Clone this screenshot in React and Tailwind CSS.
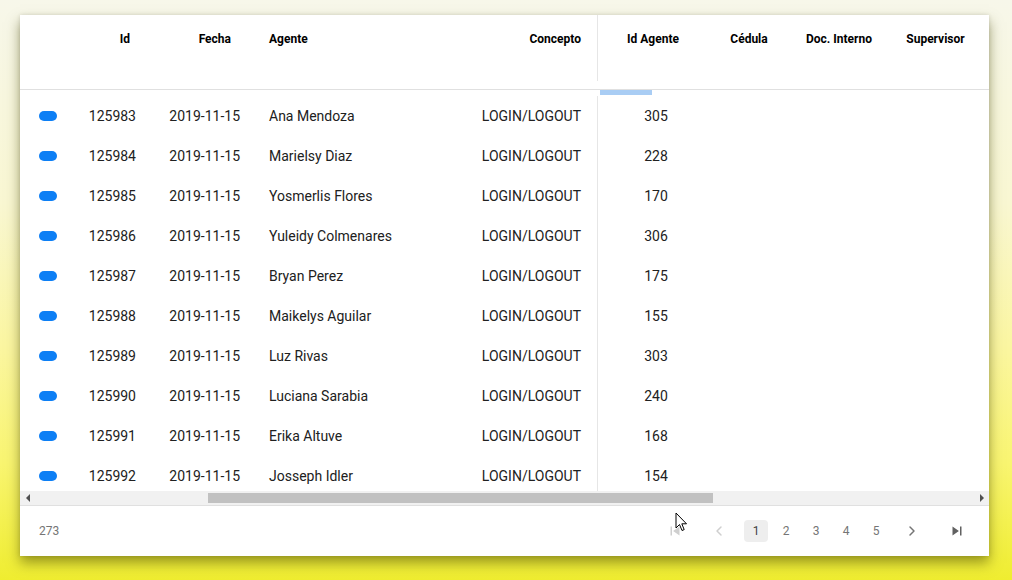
import { ChevronLeft, ChevronRight } from "lucide-react";

const rows = [
  ["125983", "Ana Mendoza", "305"],
  ["125984", "Marielsy Diaz", "228"],
  ["125985", "Yosmerlis Flores", "170"],
  ["125986", "Yuleidy Colmenares", "306"],
  ["125987", "Bryan Perez", "175"],
  ["125988", "Maikelys Aguilar", "155"],
  ["125989", "Luz Rivas", "303"],
  ["125990", "Luciana Sarabia", "240"],
  ["125991", "Erika Altuve", "168"],
  ["125992", "Josseph Idler", "154"],
];

const FirstPageIcon = ({ className }) => (
  <svg viewBox="0 0 24 24" className={className} fill="currentColor">
    <path d="M6 6h2v12H6zm3.5 6l8.5 6V6z" />
  </svg>
);

const LastPageIcon = ({ className }) => (
  <svg viewBox="0 0 24 24" className={className} fill="currentColor">
    <path d="M6 18l8.5-6L6 6v12zM16 6v12h2V6h-2z" />
  </svg>
);

export default function App() {
  return (
    <div
      className="relative w-[1012px] h-[580px] overflow-hidden pt-[15px] pl-[20px] bg-[linear-gradient(180deg,#f7f7ea_0%,#f9f7d2_35%,#fbf6a0_60%,#f9f570_80%,#efed30_100%)]"
      style={{ fontFamily: "Roboto, 'Liberation Sans', sans-serif" }}
    >
      <div className="w-[969px] bg-white shadow-[0_7px_12px_rgba(70,70,0,0.5),0_0_4px_rgba(0,0,0,0.12)]">
        {/* header */}
        <div className="flex h-[75px] border-b border-[#e0e0e0] text-[12px] font-bold text-black">
          <div className="w-[60px]" />
          <div className="w-[72px] pt-[15px] pr-[22px] text-right">Id</div>
          <div className="w-[104px] pt-[15px] pr-[25px] text-right">Fecha</div>
          <div className="w-[164px] pt-[15px] pl-[13px]">Agente</div>
          <div className="w-[178px] h-[66px] pt-[15px] pr-[16px] text-right border-r border-[#e6e6e6]">Concepto</div>
          <div className="w-[110px] pt-[15px] text-center">Id Agente</div>
          <div className="w-[82px] pt-[15px] text-center">Cédula</div>
          <div className="w-[98px] pt-[15px] text-center">Doc. Interno</div>
          <div className="w-[95px] pt-[15px] text-center">Supervisor</div>
        </div>

        {/* body */}
        <div className="h-[401px] overflow-hidden">
          <div className="h-[6px] pl-[580px]">
            <div className="w-[52px] h-[5px] bg-[#a9cdf4]" />
          </div>
          {rows.map(([id, name, agent]) => (
            <div key={id} className="flex h-[40px] items-center text-[14px] text-[#212121]">
              <div className="w-[60px] pl-[19px]">
                <div className="w-[18px] h-[10px] rounded-full bg-[#0d7ff5]" />
              </div>
              <div className="w-[72px] pr-[16px] text-right">{id}</div>
              <div className="w-[104px] pr-[16px] text-right">2019-11-15</div>
              <div className="w-[164px] pl-[13px] whitespace-nowrap">{name}</div>
              <div className="w-[178px] h-full flex items-center justify-end pr-[16px] border-r border-[#e6e6e6]">
                LOGIN/LOGOUT
              </div>
              <div className="w-[112px] text-center pl-[4px]">{agent}</div>
              <div className="w-[80px]" />
              <div className="w-[98px]" />
              <div className="w-[95px]" />
            </div>
          ))}
        </div>

        {/* horizontal scrollbar */}
        <div className="flex h-[15px] items-center bg-[#f1f1f1] border-b border-[#e0e0e0]">
          <div className="w-[15px] flex justify-center">
            <div className="w-0 h-0 border-y-[4px] border-y-transparent border-r-[4px] border-r-[#505050]" />
          </div>
          <div className="flex-1 flex items-center pl-[173px]">
            <div className="w-[505px] h-[10px] bg-[#c1c1c1]" />
          </div>
          <div className="w-[15px] flex justify-center">
            <div className="w-0 h-0 border-y-[4px] border-y-transparent border-l-[4px] border-l-[#505050]" />
          </div>
        </div>

        {/* footer */}
        <div className="flex h-[50px] items-center justify-between pl-[19px] pr-[8px]">
          <span className="text-[12px] text-[#757575]">273</span>
          <div className="flex items-center text-[12px] text-[#757575]">
            <div className="w-[44px] flex justify-center">
              <FirstPageIcon className="w-[18px] h-[18px] text-[#cfcfcf]" />
            </div>
            <div className="w-[44px] flex justify-center">
              <ChevronLeft className="w-[16px] h-[16px] text-[#cfcfcf]" strokeWidth={2.2} />
            </div>
            <div className="w-[30px] flex justify-center">
              <span className="w-[24px] h-[22px] flex items-center justify-center rounded-sm bg-[#eeeeee] text-[#424242]">1</span>
            </div>
            <div className="w-[30px] text-center">2</div>
            <div className="w-[30px] text-center">3</div>
            <div className="w-[30px] text-center">4</div>
            <div className="w-[30px] text-center">5</div>
            <div className="w-[42px] flex justify-center">
              <ChevronRight className="w-[16px] h-[16px] text-[#757575]" strokeWidth={2.2} />
            </div>
            <div className="w-[48px] flex justify-center">
              <LastPageIcon className="w-[18px] h-[18px] text-[#616161]" />
            </div>
          </div>
        </div>
      </div>

      {/* mouse cursor */}
      <svg className="absolute left-[675px] top-[512px] w-[13px] h-[21px]" viewBox="0 0 13 21">
        <path d="M1 1 L1 16 L4.5 12.5 L7 18.5 L9.2 17.6 L6.8 11.8 L11.5 11.8 Z" fill="#fff" stroke="#000" strokeWidth="1" strokeLinejoin="round" />
      </svg>
    </div>
  );
}
